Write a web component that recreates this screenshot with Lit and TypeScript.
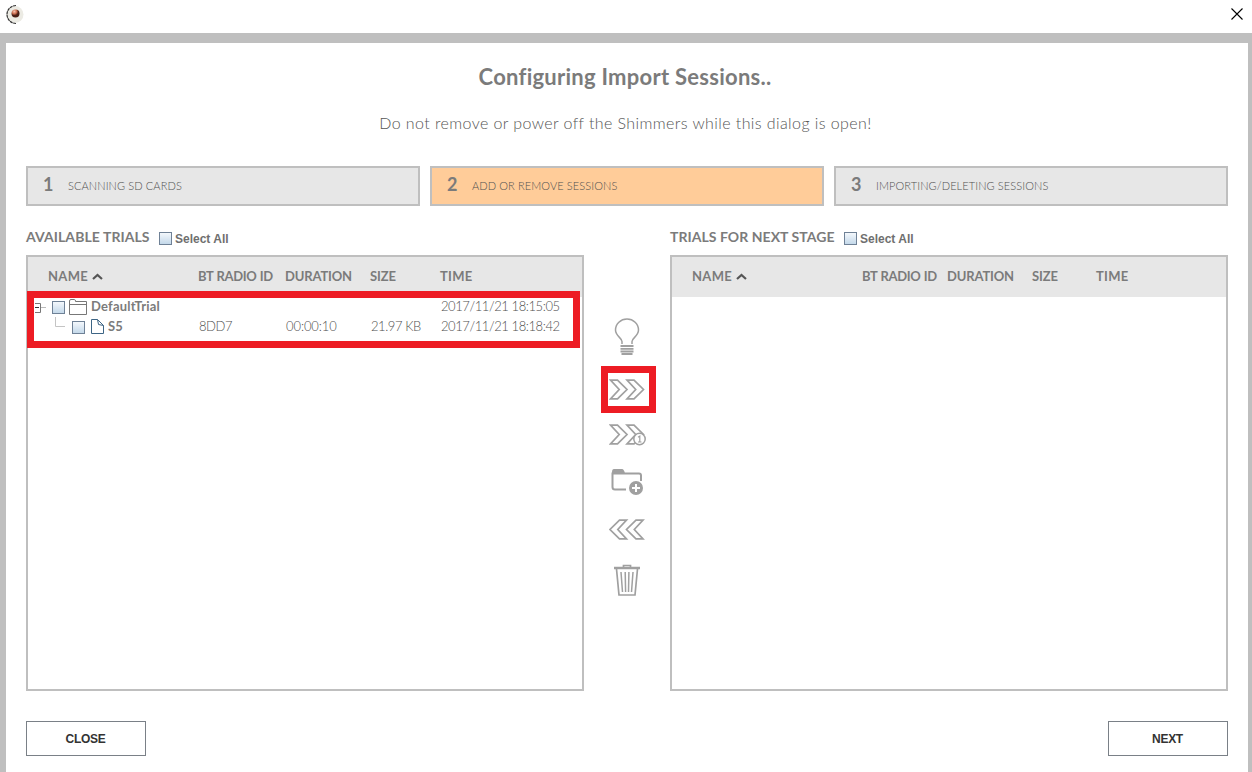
import { LitElement, html, css, svg, nothing } from "lit";
import { customElement, property } from "lit/decorators.js";

const chevrons = svg`<g stroke-width="1.7"><path d="M1.500 1.200H8.500L18 10.500 8.500 19.800H1.500L10.200 10.500Z"/><path d="M18 1.200H25L34.500 10.500 25 19.800H18L26.700 10.500Z"/></g>`;

@customElement("check-box")
class CheckBox extends LitElement {
  static styles = css`
    :host { display: block; box-sizing: border-box; width: 13px; height: 13px; border: 1px solid #6f8196;
      background: linear-gradient(#f4f8fc, #dce8f3 50%, #c4d9ea); flex: none; }
  `;
  render() { return nothing; }
}

@customElement("step-box")
class StepBox extends LitElement {
  @property() number = "";
  @property() label = "";
  static styles = css`
    :host { display: flex; align-items: center; box-sizing: border-box; height: 40px; border: 2px solid #bfbfbf;
      background: #e7e7e7; padding: 0 0 4px 15px; color: #7b7b7b; }
    :host([active]) { background: #ffcc99; }
    .num { width: 25px; font-weight: 700; font-size: 18px; }
    .label { font-weight: 300; font-size: 11px; letter-spacing: 0.1px; padding-top: 2px; white-space: nowrap; color: #505050; }
  `;
  render() {
    return html`<span class="num">${this.number}</span><span class="label">${this.label}</span>`;
  }
}

@customElement("trial-list")
class TrialList extends LitElement {
  @property() heading = "";
  @property({ type: Boolean, reflect: true }) filled = false;
  static styles = css`
    :host { display: flex; flex-direction: column; width: 558px; color: #7b7b7b; }
    .top { display: flex; height: 27px; align-items: flex-start; }
    .heading { font-weight: 700; font-size: 14px; line-height: 17px; white-space: nowrap; letter-spacing: 0.07px; width: 133px; }
    :host(:not([filled])) .heading { width: 174px; letter-spacing: 0.05px; }
    .top check-box { margin-top: 4px; }
    .all { font: 700 12px/15px "Liberation Sans", sans-serif; margin: 4px 0 0 3px; letter-spacing: 0; color: #6f6f6f; }
    .box { box-sizing: border-box; height: 436px; border: 2px solid #bfbfbf; position: relative; }
    .head, .row { display: grid; grid-template-columns: 150px 87px 85px 70px 1fr; white-space: nowrap; }
    .head { height: 40px; background: #e7e7e7; padding-left: 20px; line-height: 39px; font-weight: 700; font-size: 13px; letter-spacing: 0.3px; }
    :host(:not([filled])) .head { grid-template-columns: 170px 85px 85px 64px 1fr; }
    .radio { letter-spacing: -0.35px; word-spacing: 0.5px; }
    .duration, .size { letter-spacing: -0.15px; }
    .caret { margin-left: 4px; vertical-align: 1px; }
    .row { height: 20px; line-height: 18px; padding-left: 21px; font-weight: 300; font-size: 13px; color: #505050; letter-spacing: -0.42px; }
    .row .duration { letter-spacing: -0.1px; }
    .name { display: flex; align-items: flex-start; margin-left: -14px; font-weight: 700; color: #7b7b7b; letter-spacing: 0.2px; }
    .name check-box { margin-top: 4px; }
    .tree, .icon { flex: none; }
    .mark { position: absolute; box-sizing: border-box; left: -1px; top: 34px; width: 553px; height: 57px; border: 7px solid #ed1c24; }
  `;
  rows() {
    return html`
      <div class="row">
        <span class="name">
          <svg class="tree" width="17" height="20" fill="none"><path d="M5.500 10.500H11" stroke="#bbb"/><path d="M-2 6.500H5.500V15.500H-2" stroke="#777"/><path d="M0 10.500H4" stroke="#333"/></svg>
          <check-box></check-box>
          <svg class="icon" width="26" height="20" fill="none" stroke="#777"><path d="M4.500 17.500V4Q4.500 2.500 6 2.500H9.500Q10.500 2.500 10.500 4.500H21.500V17.500ZM4.500 7.500H21.500"/></svg>
          <span>DefaultTrial</span>
        </span>
        <span></span><span></span><span></span><span>2017/11/21 18:15:05</span>
      </div>
      <div class="row">
        <span class="name">
          <svg class="tree" width="37" height="20" fill="none" stroke="#c4c4c4"><path d="M20.500 0V9.500H30"/></svg>
          <check-box></check-box>
          <svg class="icon" width="23" height="20" fill="#fff" stroke="#3d6585"><path d="M6.500 2.500H12.500L18.500 8.500V16.500H6.500Z"/><path d="M12.500 2.500L13.500 7.500 18.500 8.500" fill="none"/></svg>
          <span>S5</span>
        </span>
        <span>8DD7</span><span class="duration">00:00:10</span><span>21.97 KB</span><span>2017/11/21 18:18:42</span>
      </div>
      <div class="mark"></div>`;
  }
  render() {
    return html`
      <div class="top"><span class="heading">${this.heading}</span><check-box></check-box><span class="all">Select All</span></div>
      <div class="box">
        <div class="head">
          <span>NAME<svg class="caret" width="11" height="7" fill="none" stroke="#555" stroke-width="2.200"><path d="M1 6 5.500 2 10 6"/></svg></span>
          <span class="radio">BT RADIO ID</span><span class="duration">DURATION</span><span class="size">SIZE</span><span>TIME</span>
        </div>
        ${this.filled ? this.rows() : nothing}
      </div>`;
  }
}

@customElement("app-root")
class AppRoot extends LitElement {
  static styles = css`
    :host { display: flex; flex-direction: column; width: 1252px; height: 772px; overflow: hidden; background: #fff; font-family: Lato, sans-serif; }
    .titlebar { height: 33px; flex: none; display: flex; justify-content: space-between; }
    .logo { margin: 4px 0 0 5px; }
    .x { margin: 7px 8px 0 0; }
    .frame { flex: 1; box-sizing: border-box; border: solid #bfbfbf; border-width: 10px 4px 0 6px; padding: 0 20px; }
    .title { margin: 0; padding: 20px 4px 0 0; text-align: center; font-size: 22px; line-height: 28px; font-weight: 700; color: #7b7b7b; letter-spacing: 0.26px; }
    .warn { margin: 0; padding: 21px 3px 0 0; text-align: center; font-size: 16px; line-height: 22px; font-weight: 300; color: #555; letter-spacing: 0.41px; }
    .steps { margin-top: 32px; display: grid; grid-template-columns: repeat(3, 1fr); gap: 10px; }
    .lists { margin-top: 22px; display: flex; }
    .tools { width: 86px; display: flex; flex-direction: column; align-items: center; padding-top: 90px; }
    .tools svg { display: block; fill: none; stroke: #a0a0a0; stroke-width: 2; flex: none; }
    .marked { box-sizing: border-box; width: 55px; height: 47px; border: 7px solid #ed1c24; margin: 10px 0 0 2px; padding-right: 2px; display: flex; justify-content: center; align-items: center; }
    .one { margin: 11px 0 0 2px; } .add { margin-top: 20px; } .back { margin: 23px 1px 0 0; } .trash { margin-top: 24px; }
    .buttons { margin-top: 30px; display: flex; justify-content: space-between; }
    .btn { box-sizing: border-box; width: 120px; height: 35px; border: 1px solid #7a8087; background: #fff; padding: 0 1px 0 0; font: 700 12px "Liberation Sans", sans-serif; letter-spacing: -0.3px; color: #333; }
  `;
  render() {
    return html`
      <div class="titlebar">
        <svg class="logo" width="20" height="22">
          <defs><radialGradient id="g" cx=".35" cy=".25"><stop offset="0" stop-color="#f8c8b5"/><stop offset=".6" stop-color="#c8694c"/><stop offset="1" stop-color="#4a1f16"/></radialGradient></defs>
          <circle cx="10" cy="10.500" r="8.500" fill="#ecebe4"/><path d="M11 1.500A9 9 0 0 0 11 19.500" fill="none" stroke="#333" stroke-width="1.200" stroke-dasharray="3 .6"/><circle cx="10.500" cy="9.500" r="4" fill="url(#g)"/>
        </svg>
        <svg class="x" width="14" height="14" stroke="#000" stroke-width="1.1"><path d="M1.500 1.500 12.500 12.500M12.500 1.500 1.500 12.500"/></svg>
      </div>
      <div class="frame">
        <h1 class="title">Configuring Import Sessions..</h1>
        <p class="warn">Do not remove or power off the Shimmers while this dialog is open!</p>
        <div class="steps">
          <step-box number="1" label="SCANNING SD CARDS"></step-box>
          <step-box number="2" label="ADD OR REMOVE SESSIONS" active></step-box>
          <step-box number="3" label="IMPORTING/DELETING SESSIONS"></step-box>
        </div>
        <div class="lists">
          <trial-list heading="AVAILABLE TRIALS" filled></trial-list>
          <div class="tools">
            <svg width="26" height="38"><path d="M8 26V23.500C8 20 1.500 18 1.500 12A11.500 11 0 0 1 24.500 12C24.500 18 18 20 18 23.500V26" stroke-width="1.500"/><path d="M6.500 28H19.500M6.500 30.800H19.500M6.500 33.500H19.500M7.500 36H18.500" stroke-width="1.800"/></svg>
            <div class="marked"><svg width="36" height="21">${chevrons}</svg></div>
            <svg class="one" width="38" height="24">${chevrons}<circle cx="30.500" cy="15" r="5.700" fill="#fff" stroke-width="1.500"/><path d="M29 13.200 30.800 12V18M29 18H32.500" stroke-width="1.200"/></svg>
            <svg class="add" width="34" height="28"><path d="M16 21.500H5Q2.500 21.500 2.500 19V5.500H29Q31 5.500 31 7.500V13"/><path d="M2 5.500V4Q2 1 4 1H12Q14 1 15 5.500Z" fill="#a0a0a0" stroke="none"/><circle cx="26" cy="20" r="7" fill="#a0a0a0" stroke="none"/><path d="M26 16V24M22 20H30" stroke="#fff"/></svg>
            <svg class="back" width="36" height="21"><g transform="matrix(-1 0 0 1 35.500 0)">${chevrons}</g></svg>
            <svg class="trash" width="28" height="33"><path d="M1 4H27" stroke-width="2.500"/><path d="M10.500 3V1.500H17.500V3M3.500 5 6 31H22L24.500 5" stroke-width="1.700"/><path d="M8 8 9.500 28M12.200 8 12.600 28M15.900 8 15.500 28M20 8 18.500 28" stroke-width="1.500"/></svg>
          </div>
          <trial-list heading="TRIALS FOR NEXT STAGE"></trial-list>
        </div>
        <div class="buttons"><button class="btn">CLOSE</button><button class="btn">NEXT</button></div>
      </div>`;
  }
}
